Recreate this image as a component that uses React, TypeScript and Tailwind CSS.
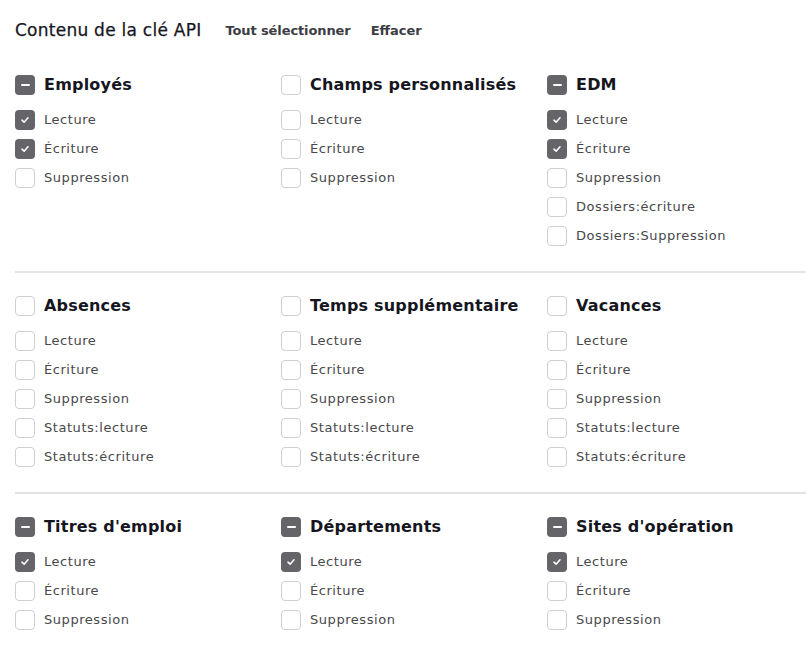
import React from "react";

type Item = { label: string; checked: boolean };
type Group = { title: string; state: "none" | "partial"; items: Item[] };

const base = ["Lecture", "Écriture", "Suppression"];
const statuts = ["Lecture", "Écriture", "Suppression", "Statuts:lecture", "Statuts:écriture"];

const mk = (labels: string[], n: number): Item[] => labels.map((l, i) => ({ label: l, checked: i < n }));

const rows: Group[][] = [
  [
    { title: "Employés", state: "partial", items: mk(base, 2) },
    { title: "Champs personnalisés", state: "none", items: mk(base, 0) },
    {
      title: "EDM",
      state: "partial",
      items: mk([...base, "Dossiers:écriture", "Dossiers:Suppression"], 2),
    },
  ],
  [
    { title: "Absences", state: "none", items: mk(statuts, 0) },
    { title: "Temps supplémentaire", state: "none", items: mk(statuts, 0) },
    { title: "Vacances", state: "none", items: mk(statuts, 0) },
  ],
  [
    { title: "Titres d'emploi", state: "partial", items: mk(base, 1) },
    { title: "Départements", state: "partial", items: mk(base, 1) },
    { title: "Sites d'opération", state: "partial", items: mk(base, 1) },
  ],
];

function Box({ kind }: { kind: "empty" | "check" | "minus" }) {
  if (kind === "empty") {
    return <span className="block w-5 h-5 shrink-0 rounded-[4px] border border-[#cfcfcf] bg-white" />;
  }
  return (
    <span className="flex w-5 h-5 shrink-0 items-center justify-center rounded-[4px] bg-[#646469]">
      {kind === "check" ? (
        <svg width="10" height="10" viewBox="0 0 10 10" fill="none">
          <path d="M2 5.2 L4.1 7.2 L8 2.8" stroke="white" strokeWidth="1.6" strokeLinecap="round" strokeLinejoin="round" />
        </svg>
      ) : (
        <span className="block w-[9px] h-[2px] rounded-full bg-white" />
      )}
    </span>
  );
}

function GroupCol({ g }: { g: Group }) {
  return (
    <div className="flex flex-col">
      <div className="flex items-center gap-[9px] h-5">
        <Box kind={g.state === "partial" ? "minus" : "empty"} />
        <span className="text-[16px] font-bold text-[#16161f] tracking-[0.2px] whitespace-nowrap">{g.title}</span>
      </div>
      <div className="flex flex-col gap-[9px] mt-[15px]">
        {g.items.map((it) => (
          <div key={it.label} className="flex items-center gap-[9px] h-5">
            <Box kind={it.checked ? "check" : "empty"} />
            <span className="text-[13px] text-[#48484c] tracking-[0.55px] whitespace-nowrap">{it.label}</span>
          </div>
        ))}
      </div>
    </div>
  );
}

export default function App() {
  return (
    <div
      className="w-[806px] h-[657px] bg-white overflow-hidden pl-[15px] pt-[21px]"
      style={{ fontFamily: '"DejaVu Sans", "Noto Sans", sans-serif' }}
    >
      <div className="flex items-center h-5 gap-[24px]">
        <span className="text-[17px] text-[#16161f] tracking-[0.25px] [-webkit-text-stroke:0.25px_#16161f]">
          Contenu de la clé API
        </span>
        <div className="flex items-center gap-[20px]">
          <span className="text-[13px] font-semibold text-[#3c3c44] tracking-[-0.1px]">Tout sélectionner</span>
          <span className="text-[13px] font-semibold text-[#3c3c44] tracking-[0px]">Effacer</span>
        </div>
      </div>
      <div className="mt-[34px] flex flex-col">
        {rows.map((row, i) => (
          <div key={i} className="flex flex-col">
            {i > 0 && <div className="h-[2px] bg-[#e3e3e3] mt-[25px] mb-[23px]" />}
            <div className="grid grid-cols-[266px_266px_266px]">
              {row.map((g) => (
                <GroupCol key={g.title} g={g} />
              ))}
            </div>
          </div>
        ))}
      </div>
    </div>
  );
}
